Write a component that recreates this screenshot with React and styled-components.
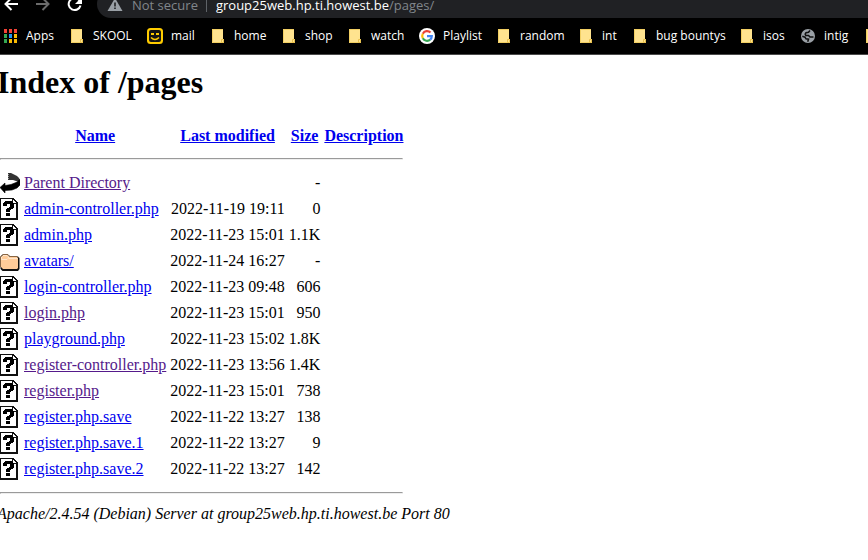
import React from "react";
import styled, { createGlobalStyle } from "styled-components";

const GlobalStyle = createGlobalStyle`
  body { margin: 0; background: #fff; }
`;

const Browser = styled.header`
  font-family: "Open Sans", "Segoe UI", sans-serif;
`;
const Toolbar = styled.div`
  display: flex;
  align-items: flex-end;
  height: 18px;
  background: #000;
  overflow: hidden;
`;
const NavButton = styled.button`
  flex: none;
  width: 32px;
  height: 28px;
  padding: 0 0 0 3px;
  border: 0;
  background: none;
  color: ${(p) => (p.disabled ? "#6b6b6b" : "#fff")};
  text-align: left;
  line-height: 0;
`;
const AddressBar = styled.div`
  display: flex;
  align-items: center;
  flex: 1;
  box-sizing: border-box;
  height: 28px;
  margin-left: 1px;
  padding: 2px 0 0 10px;
  background: #202124;
  border-radius: 14px 0 0 14px;
  font-size: 13px;
  line-height: 14px;
  color: #80868b;
  white-space: nowrap;
`;
const Security = styled.span`
  margin: 0 8px 0 9px;
`;
const Divider = styled.span`
  width: 1px;
  height: 14px;
  margin-right: 9px;
  background: #5f6368;
`;
const Host = styled.span`
  color: #fff;
`;
const Bookmarks = styled.nav`
  display: flex;
  align-items: center;
  height: 36px;
  padding-left: 2px;
  background: #000;
  border-bottom: 1px solid #4a4a4a;
  overflow: hidden;
`;
const Bookmark = styled.a`
  display: flex;
  align-items: center;
  gap: 8px;
  flex: 0 0 ${(p) => p.$width}px;
  color: #fff;
  font-size: 12px;
  line-height: 16px;
  text-decoration: none;
  white-space: nowrap;
  svg { flex: none; }
`;
const Page = styled.main`
  margin: 9px 8px 8px -3px;
  font: 16px/18px "Liberation Serif", "Times New Roman", serif;
  color: #000;
`;
const Title = styled.h1`
  margin: 0 0 22px;
  font-size: 32px;
  line-height: 37px;
`;
const Listing = styled.table`
  border-spacing: 2px;
  td, th { padding: 1px; }
  svg { display: block; }
`;
const HeaderCell = styled.th`
  line-height: 20px;
`;
const Num = styled.td`
  text-align: right;
`;
const Link = styled.a`
  color: ${(p) => (p.$visited ? "#551a8b" : "#0000ee")};
  text-decoration: underline;
`;
const Footer = styled.address`
  font-style: italic;
`;

const Svg = (props) => <svg width="16" height="16" viewBox="0 0 16 16" aria-hidden="true" {...props} />;

const BackArrow = () => (
  <Svg fill="none" stroke="currentColor" strokeWidth="2"><path d="M15 8H3M8.500 2 2.500 8l6 6" /></Svg>
);
const ForwardArrow = () => (
  <Svg fill="none" stroke="currentColor" strokeWidth="2"><path d="M1 8h12M7.500 2l6 6-6 6" /></Svg>
);
const ReloadIcon = () => (
  <Svg><path d="M13.500 9.500A6 6 0 1 1 12.500 4.500" fill="none" stroke="currentColor" strokeWidth="2" /><path d="M15 1v7H8z" fill="currentColor" /></Svg>
);
const WarningIcon = () => (
  <Svg><path d="M8 1 15.500 14H.5z" fill="#9aa0a6" /><path d="M7.200 5.500h1.600v4H7.200zM7.200 10.500h1.600v1.600H7.200z" fill="#202124" /></Svg>
);
const appColours = ["#f44336", "#f44336", "#f44336", "#34a853", "#2196f3", "#fbbc04", "#34a853", "#fbbc04", "#fbbc04"];
const AppsIcon = () => (
  <Svg shapeRendering="crispEdges">
    {appColours.map((c, i) => (
      <rect key={i} x={2 + (i % 3) * 5} y={1 + Math.floor(i / 3) * 5} width="3" height="4" fill={c} />
    ))}
  </Svg>
);
const FolderIcon = () => (
  <Svg>
    <path d="M2 1h11v10h1v4H2z" fill="#ffe38f" />
    <path d="M2.500 1v13.500H14M2 1.500h11" fill="none" stroke="#f2cf63" />
    <path d="M11.500 14.500v-3h2v3z" fill="#ffe38f" stroke="#e8c04c" />
  </Svg>
);
const MailIcon = () => (
  <Svg>
    <rect width="16" height="16" rx="3.500" fill="#fc0" />
    <rect x="2" y="2" width="12" height="12" rx="2" fill="#141414" />
    <path d="M4 5h3v2H4zM9 5h3v2H9z" fill="#fc0" />
    <path d="M4 9.500q4 4 8 0" fill="none" stroke="#fc0" strokeWidth="1.500" />
  </Svg>
);
const GoogleIcon = () => (
  <Svg>
    <circle cx="8" cy="8" r="8" fill="#fff" />
    <g fill="none" strokeWidth="2.200">
      <path d="M3.800 5.700A4.800 4.800 0 0 1 11.500 4.600" stroke="#ea4335" />
      <path d="M3.800 10.300A4.800 4.800 0 0 1 3.800 5.700" stroke="#fbbc05" />
      <path d="M11.200 11.600A4.800 4.800 0 0 1 3.800 10.300" stroke="#34a853" />
      <path d="M8 8.200h4.800A4.800 4.800 0 0 1 11.200 11.600" stroke="#4285f4" />
    </g>
  </Svg>
);
const GlobeIcon = () => (
  <Svg>
    <circle cx="8" cy="8" r="7" fill="#9aa0a6" />
    <path d="M10 2.500 8.500 4.200 6 4.800Q4.500 6.500 6 7.500h2.500L10 9h3.500M2.300 8.300 5 9.200l1 1.600 2.500.4-.8 2.500" fill="none" stroke="#111" strokeWidth="1.600" />
  </Svg>
);

const UnknownIcon = () => (
  <svg width="20" height="22" viewBox="0 0 20 22" shapeRendering="crispEdges" role="img" aria-label="file">
    <path d="M0 0h13l5 5v17H0z" fill="#111" />
    <path d="M1 1h11v5h4v14H1z" fill="#fff" />
    <path d="M13 2l3 3h-3z" fill="#fff" />
    <path d="M5 3h7v1h1v1h1v5h-1v1h-2v1h-1v2H6v-3h1v-1h2V9h1V6H7v2H3V5h1V4h1zM6 15h4v3H6z" fill="#000" />
  </svg>
);
const DirectoryIcon = () => (
  <svg width="20" height="22" viewBox="0 0 20 22" role="img" aria-label="directory">
    <path d="M2.500 4.500h5l2 2h8.500l1.500 1.500v11l-1.500 2H2.500l-2-2V6.500z" fill="#111" />
    <path d="M1 7l2-2h4.500l2 2H17l1 1v10l-1 1H3l-2-2z" fill="#fc9" />
    <path d="M1.500 9.500V7L3 5.500h4L8.500 7v1L7 9.500zM9 8.500h8.500" fill="none" stroke="#ffe6cc" />
    <path d="M.5 17V7l2.500-2.500h5l2 2h7l1.500 1.500" fill="none" stroke="#864" />
  </svg>
);
const ParentIcon = () => (
  <svg width="20" height="22" viewBox="0 0 20 22" role="img" aria-label="parent directory">
    <path d="M8 1h3l2 1 4 2 2 2 1 2v1h-4l-3-1H8z" fill="#333" />
    <path d="M8.500 2v6" stroke="#999" strokeDasharray="1 1" />
    <path d="M0 15.500 5 11v2.500l6-1 5-2 4-3V13l-3 3-5 2-7 .5V21z" fill="#000" stroke="#000" strokeWidth=".6" />
  </svg>
);

const icons = { apps: AppsIcon, folder: FolderIcon, mail: MailIcon, google: GoogleIcon, globe: GlobeIcon };
const bookmarks = [
  ["Apps", "apps", 67], ["SKOOL", "folder", 78], ["mail", "mail", 63], ["home", "folder", 71],
  ["shop", "folder", 66], ["watch", "folder", 72], ["Playlist", "google", 77], ["random", "folder", 82],
  ["int", "folder", 54], ["bug bountys", "folder", 107], ["isos", "folder", 61], ["intig", "globe", 64], ["", "folder", 20],
];
const files = [
  ["Parent Directory", "", "-", true, ParentIcon],
  ["admin-controller.php", "2022-11-19 19:11", "0"],
  ["admin.php", "2022-11-23 15:01", "1.1K"],
  ["avatars/", "2022-11-24 16:27", "-", false, DirectoryIcon],
  ["login-controller.php", "2022-11-23 09:48", "606"],
  ["login.php", "2022-11-23 15:01", "950", true],
  ["playground.php", "2022-11-23 15:02", "1.8K"],
  ["register-controller.php", "2022-11-23 13:56", "1.4K", true],
  ["register.php", "2022-11-23 15:01", "738", true],
  ["register.php.save", "2022-11-22 13:27", "138"],
  ["register.php.save.1", "2022-11-22 13:27", "9"],
  ["register.php.save.2", "2022-11-22 13:27", "142"],
];
const columns = ["Name", "Last modified", "Size", "Description"];

export default function App() {
  return (
    <>
      <GlobalStyle />
      <Browser>
        <Toolbar>
          <NavButton aria-label="Back"><BackArrow /></NavButton>
          <NavButton aria-label="Forward" disabled><ForwardArrow /></NavButton>
          <NavButton aria-label="Reload"><ReloadIcon /></NavButton>
          <AddressBar>
            <WarningIcon />
            <Security>Not secure</Security>
            <Divider />
            <Host>group25web.hp.ti.howest.be</Host>
            <span>/pages/</span>
          </AddressBar>
        </Toolbar>
        <Bookmarks>
          {bookmarks.map(([name, icon, width]) => {
            const Icon = icons[icon];
            return <Bookmark key={name} href="#" $width={width}><Icon />{name}</Bookmark>;
          })}
        </Bookmarks>
      </Browser>
      <Page>
        <Title>Index of /pages</Title>
        <Listing>
          <thead>
            <tr>
              <HeaderCell />
              {columns.map((h) => <HeaderCell key={h}><Link href="#">{h}</Link></HeaderCell>)}
            </tr>
            <tr><th colSpan={5}><hr /></th></tr>
          </thead>
          <tbody>
            {files.map(([name, date, size, visited, Icon = UnknownIcon]) => (
              <tr key={name}>
                <td><Icon /></td>
                <td><Link href="#" $visited={visited}>{name}</Link></td>
                <Num>{date}</Num>
                <Num>{size}</Num>
              </tr>
            ))}
            <tr><th colSpan={5}><hr /></th></tr>
          </tbody>
        </Listing>
        <Footer>Apache/2.4.54 (Debian) Server at group25web.hp.ti.howest.be Port 80</Footer>
      </Page>
    </>
  );
}
